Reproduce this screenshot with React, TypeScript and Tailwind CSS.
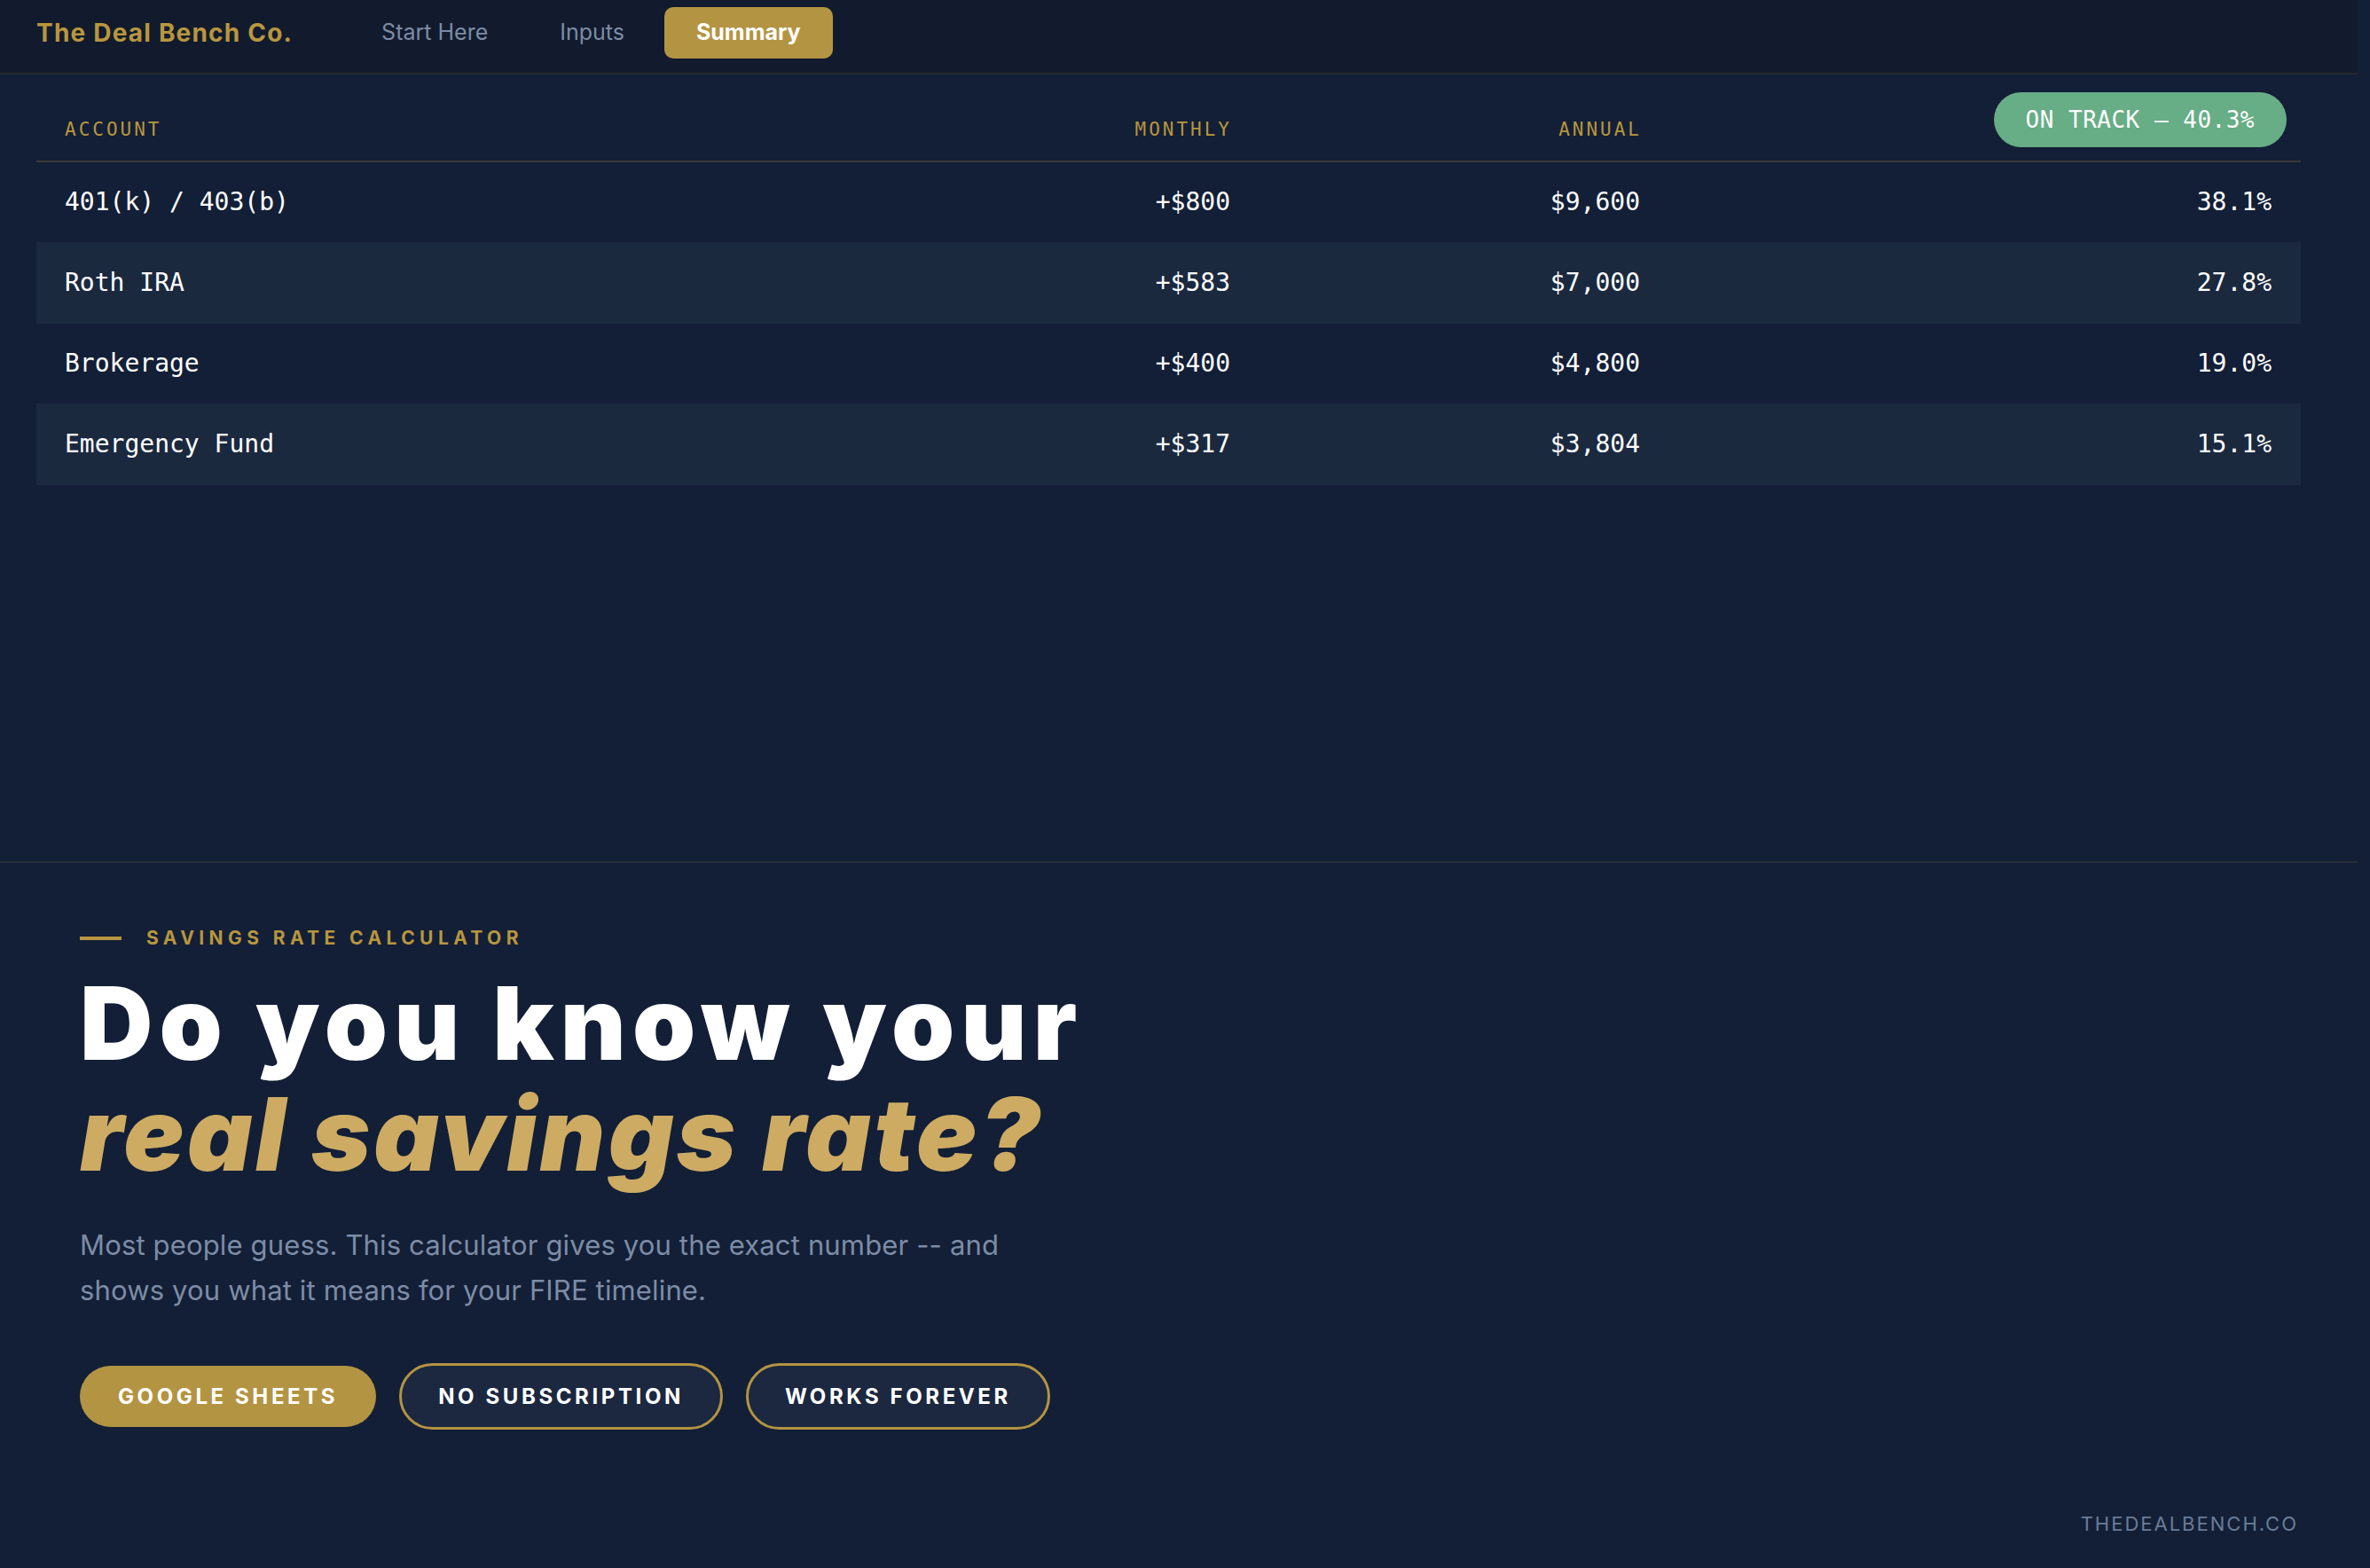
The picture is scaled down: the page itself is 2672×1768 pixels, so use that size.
import React from "react";

type AccountRow = {
  name: string;
  monthly: string;
  annual: string;
  share: string;
};

const accounts: AccountRow[] = [
  { name: "401(k) / 403(b)", monthly: "+$800", annual: "$9,600", share: "38.1%" },
  { name: "Roth IRA", monthly: "+$583", annual: "$7,000", share: "27.8%" },
  { name: "Brokerage", monthly: "+$400", annual: "$4,800", share: "19.0%" },
  { name: "Emergency Fund", monthly: "+$317", annual: "$3,804", share: "15.1%" },
];

const navLinks = ["Start Here", "Inputs", "Summary"];
const active = "Summary";

const tags = [
  { label: "GOOGLE SHEETS", filled: true },
  { label: "NO SUBSCRIPTION", filled: false },
  { label: "WORKS FOREVER", filled: false },
];

export default function App() {
  return (
    <div className="min-h-screen bg-[#131f36] font-['Inter',sans-serif] flex flex-col">
      {/* App preview: nav + summary table */}
      <div className="w-[2658px] h-[973px] border-b-2 border-[#272e38] flex flex-col shrink-0">
        <nav className="h-[84px] pb-[8px] bg-[#111b2d] border-b-2 border-[#25292d] flex items-center pl-[41px]">
          <span className="text-[28px] font-bold tracking-[1.2px] text-[#b8963f]">
            The Deal Bench Co.
          </span>
          <div className="ml-[64px] flex items-center gap-[9px]">
            {navLinks.map((link) => (
              <button
                key={link}
                className={`h-[58px] px-[36px] rounded-[10px] text-[25px] ${
                  link === active
                    ? "bg-[#b39442] text-white font-bold"
                    : "text-[#7d8ba5]"
                }`}
              >
                {link}
              </button>
            ))}
          </div>
        </nav>

        <div className="relative w-[2553px] ml-[41px] pt-[28px] font-['DejaVu_Sans_Mono',monospace]">
          <span className="absolute top-[20px] right-[16px] h-[62px] px-[36px] rounded-full bg-[#67ad86] text-white text-[26px] tracking-[0.5px] flex items-center">
            ON TRACK — 40.3%
          </span>

          {/* Header */}
          <div className="grid grid-cols-[917px_462px_462px_1fr] border-b-2 border-[#3c3a36] text-[21px] leading-[31px] tracking-[3px] text-[#b8963f]">
            <div className="py-[19px] pl-[32px]">ACCOUNT</div>
            <div className="py-[19px] pr-[31px] text-right">MONTHLY</div>
            <div className="py-[19px] pr-[31px] text-right">ANNUAL</div>
            <div />
          </div>

          {accounts.map((row, i) => (
            <div
              key={row.name}
              className={`grid grid-cols-[917px_462px_462px_1fr] h-[91px] items-center border-b border-[#1e2a40] text-[28px] text-white ${
                i % 2 === 1 ? "bg-[#1b293f]" : ""
              }`}
            >
              <div className="pl-[32px]">{row.name}</div>
              <div className="pr-[33px] text-right">{row.monthly}</div>
              <div className="pr-[33px] text-right">{row.annual}</div>
              <div className="pr-[33px] text-right">{row.share}</div>
            </div>
          ))}
        </div>
      </div>

      {/* Hero */}
      <section className="flex-1 flex flex-col pl-[90px] pr-[81px] pt-[70px] pb-[33px]">
        <div className="flex items-center gap-[28px] h-[30px]">
          <span className="w-[47px] h-[4px] bg-[#b8963f]" />
          <span className="text-[21px] font-bold tracking-[5.4px] text-[#b8963f]">
            SAVINGS RATE CALCULATOR
          </span>
        </div>

        <h1 className="mt-[18px] text-[114px] leading-[125px] font-black">
          <span className="block text-white tracking-[7.2px]">Do you know your</span>
          <span className="block italic text-[#cdab63] tracking-[3.3px]">real savings rate?</span>
        </h1>

        <p className="mt-[37px] max-w-[1080px] text-[31px] leading-[51px] tracking-[0.15px] text-[#7d8ca6]">
          Most people guess. This calculator gives you the exact number -- and shows you what it
          means for your FIRE timeline.
        </p>

        <div className="mt-[57px] flex items-center gap-[26px]">
          {tags.map((tag) => (
            <span
              key={tag.label}
              className={`rounded-full text-[24px] font-bold tracking-[3.6px] text-white flex items-center ${
                tag.filled
                  ? "h-[69px] px-[43px] bg-[#b39442]"
                  : "h-[75px] px-[41px] border-[3px] border-[#b39442] bg-[#1b283f]"
              }`}
            >
              {tag.label}
            </span>
          ))}
        </div>

        <div className="mt-auto self-end text-[22px] tracking-[2px] text-[#6a7c98]">
          THEDEALBENCH.CO
        </div>
      </section>
    </div>
  );
}
